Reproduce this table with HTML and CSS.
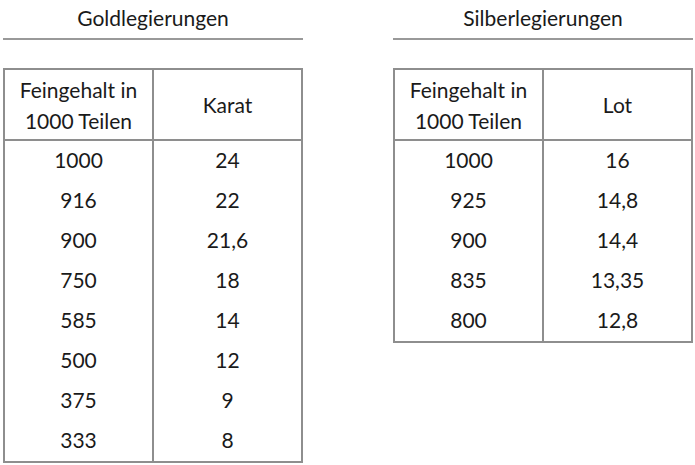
FILE: index.html
```html
<!DOCTYPE html>
<html lang="de">
<head>
<meta charset="utf-8">
<link rel="stylesheet" href="styles.css">
</head>
<body>
<div class="page">
  <section class="group">
    <h2 class="title">Goldlegierungen</h2>
    <table class="alloy">
      <thead>
        <tr><th>Feingehalt in<br>1000 Teilen</th><th>Karat</th></tr>
      </thead>
      <tbody>
        <tr><td>1000</td><td>24</td></tr>
        <tr><td>916</td><td>22</td></tr>
        <tr><td>900</td><td>21,6</td></tr>
        <tr><td>750</td><td>18</td></tr>
        <tr><td>585</td><td>14</td></tr>
        <tr><td>500</td><td>12</td></tr>
        <tr><td>375</td><td>9</td></tr>
        <tr><td>333</td><td>8</td></tr>
      </tbody>
    </table>
  </section>
  <section class="group">
    <h2 class="title">Silberlegierungen</h2>
    <table class="alloy">
      <thead>
        <tr><th>Feingehalt in<br>1000 Teilen</th><th>Lot</th></tr>
      </thead>
      <tbody>
        <tr><td>1000</td><td>16</td></tr>
        <tr><td>925</td><td>14,8</td></tr>
        <tr><td>900</td><td>14,4</td></tr>
        <tr><td>835</td><td>13,35</td></tr>
        <tr><td>800</td><td>12,8</td></tr>
      </tbody>
    </table>
  </section>
</div>
</body>
</html>
```

FILE: styles.css
```css
html, body {
  margin: 0;
  padding: 0;
  background: #ffffff;
}
body {
  font-family: "Lato", "Open Sans", sans-serif;
  color: #1a1a1a;
}
.page {
  display: flex;
  align-items: flex-start;
  gap: 90px;
  padding: 0 0 0 3px;
}
.group {
  width: 300px;
  display: flex;
  flex-direction: column;
}
.title {
  margin: 0;
  height: 40px;
  box-sizing: border-box;
  padding-top: 5px;
  font-size: 21px;
  font-weight: 400;
  line-height: 26px;
  text-align: center;
  border-bottom: 2px solid #999999;
}
.alloy {
  margin-top: 28px;
  width: 300px;
  border-collapse: collapse;
  border: 2px solid #8e8e8e;
  font-size: 21px;
  table-layout: fixed;
}
.alloy th,
.alloy td {
  width: 50%;
  text-align: center;
  font-weight: 400;
  padding: 0;
  border-left: 2px solid #8e8e8e;
}
.alloy th {
  height: 69px;
  line-height: 31px;
  border-bottom: 2px solid #8e8e8e;
}
.alloy td {
  height: 37px;
  line-height: 24px;
  padding-bottom: 3px;
}
```
